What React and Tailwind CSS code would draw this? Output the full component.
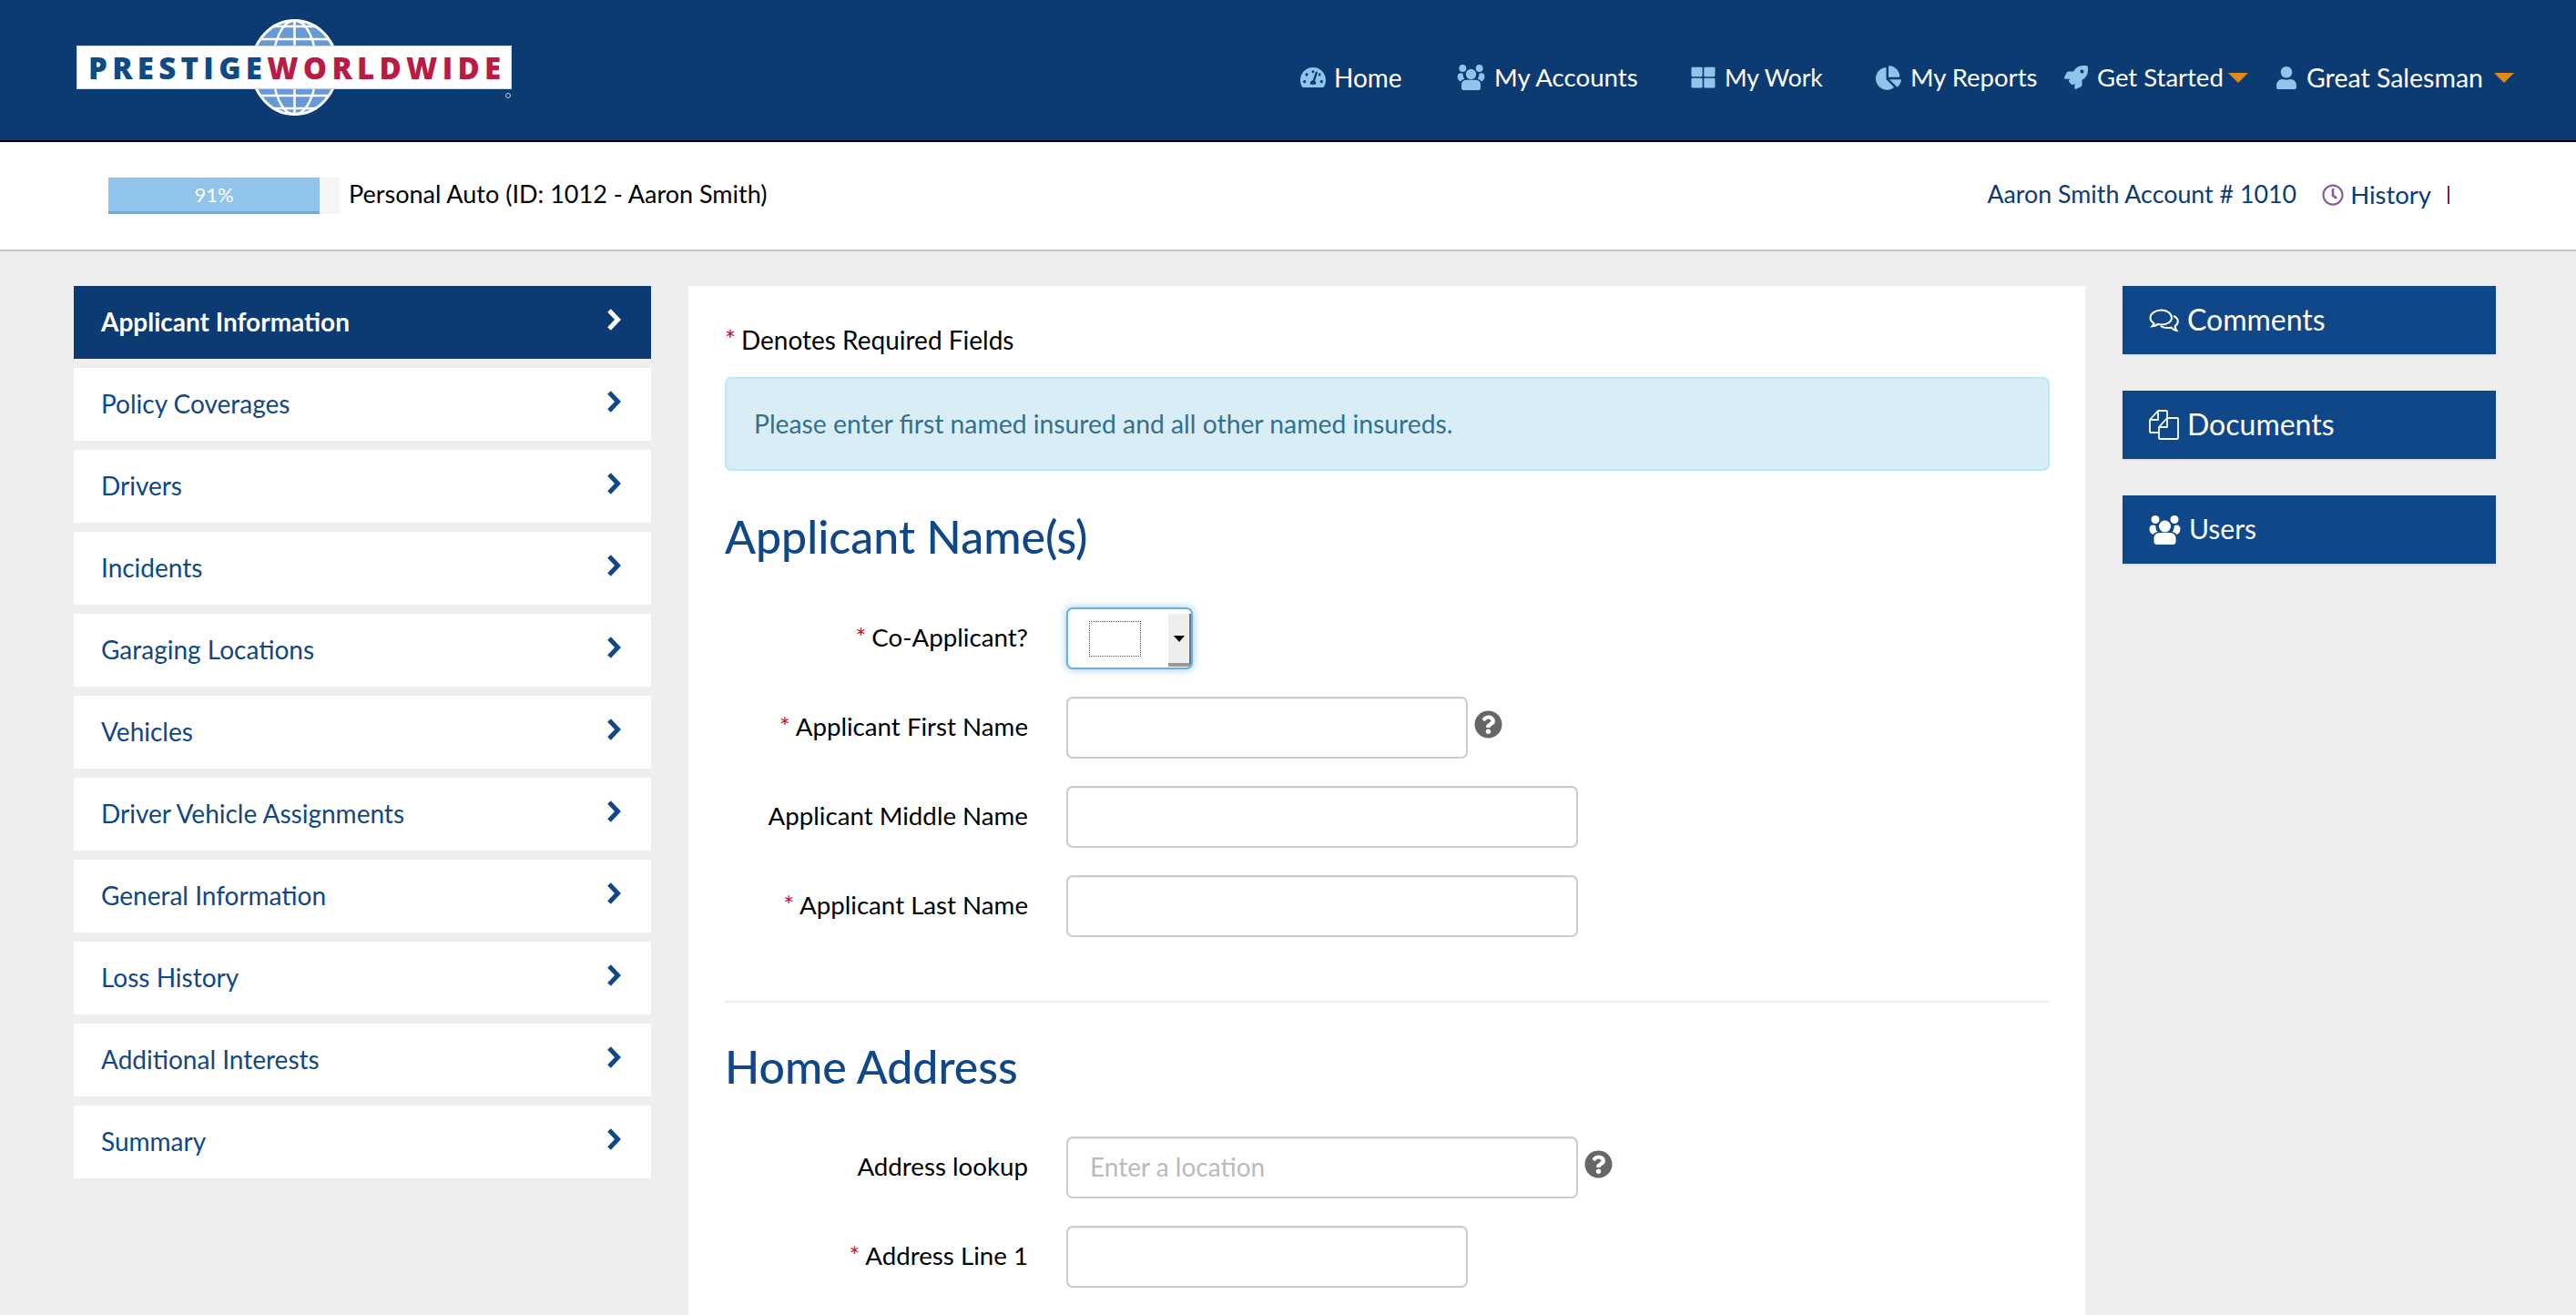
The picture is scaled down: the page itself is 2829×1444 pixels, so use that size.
import { FaChartPie, FaQuestionCircle, FaRegClock, FaRocket, FaTachometerAlt, FaThLarge, FaUser } from 'react-icons/fa';

const sideItems = [
  'Applicant Information',
  'Policy Coverages',
  'Drivers',
  'Incidents',
  'Garaging Locations',
  'Vehicles',
  'Driver Vehicle Assignments',
  'General Information',
  'Loss History',
  'Additional Interests',
  'Summary',
];

const UsersIcon = ({ className }) => (
  <svg className={className} viewBox="0 0 34 32" fill="currentColor">
    <circle cx="6.5" cy="4.5" r="4.5" />
    <circle cx="27.5" cy="4.5" r="4.5" />
    <path d="M0 15c0-3 1.500-4.500 4-4.500 1 0 2 .5 3 1-.5 3 .5 5 2 6.500-2.500.5-4 1.500-5 3C1.500 20 0 18 0 15zM34 15c0-3-1.500-4.500-4-4.500-1 0-2 .5-3 1 .5 3-.5 5-2 6.500 2.500.5 4 1.500 5 3 2.500-1 4-3 4-6z" />
    <circle cx="17" cy="12" r="6.500" />
    <path d="M5 25c0-4 3-6 7-6h10c4 0 7 2 7 6v4c0 2-1.500 3-3 3H8c-1.500 0-3-1-3-3z" />
  </svg>
);

const CommentsIcon = ({ className }) => (
  <svg className={className} viewBox="0 0 33 26" fill="none" stroke="currentColor" strokeWidth="2">
    <path d="M14 1.500c-6.500 0-12.500 3.500-12.500 8.500 0 2.500 1.500 4.500 4 6-.3 1.200-1 2.200-2 3.300 2.500-.2 4.500-1 6-2.200 1.500.3 3 .4 4.500.4 6.500 0 11-3.500 11-7.500s-4.500-8.500-11-8.500z" />
    <path d="M27 8c3 1.300 4.800 3.500 4.800 6 0 2.200-1.300 4-3.300 5.300.2 1.700 1 3.200 2 4.700-2.500-.5-4.500-1.700-6-3.300-1.300.3-2.600.4-4 .4-3 0-5.500-.7-7.500-2" />
  </svg>
);

const DocsIcon = ({ className }) => (
  <svg className={className} viewBox="0 0 33 33" fill="none" stroke="currentColor" strokeWidth="1.800" strokeLinejoin="round">
    <path d="M11 25H2a1 1 0 0 1-1-1V11l9-10h9a1 1 0 0 1 1 1v7" />
    <path d="M10 1v10H1" />
    <path d="M12 32a1 1 0 0 1-1-1V19l9-10h11a1 1 0 0 1 1 1v21a1 1 0 0 1-1 1z" />
    <path d="M20 9v10h-9" />
  </svg>
);

const Chevron = () => (
  <svg className="w-[17px] h-[24px] mb-[6px]" viewBox="0 0 17 24" fill="none" stroke="currentColor" strokeWidth="5">
    <polyline points="3,2 12.500,12 3,22" />
  </svg>
);

const Globe = () => (
  <svg className="absolute left-[191px] top-[-29px] w-[97px] h-[106px]" viewBox="0 0 97 106" fill="none" stroke="#fff" strokeWidth="2.500">
    <ellipse cx="48.500" cy="53" rx="47" ry="51.500" fill="#6699d6" strokeWidth="3" />
    <ellipse cx="48.500" cy="53" rx="24" ry="51.500" />
    <path d="M48.500 2v102M10 22h77M3 38h91M3 68h91M10 84h77M24 8h49M24 98h49" />
  </svg>
);

const Logo = () => (
  <div className="relative ml-[84px] mt-[50px] w-[478px]">
    <Globe />
    <div className="relative h-[48px] bg-white border border-[#c9d6e6] flex items-center pl-[12px] font-['Open_Sans',sans-serif] font-extrabold text-[33px] leading-none tracking-[5.300px] whitespace-nowrap">
      <span className="text-[#0e4a84]">PRESTIGE</span>
      <span className="text-[#b81c45]">WORLDWIDE</span>
    </div>
    <span className="absolute left-[471px] top-[52px] w-[6px] h-[6px] rounded-full border border-[#b9c9dc]"></span>
  </div>
);

const NavItem = ({ icon, label, width, className }) => (
  <a className={`flex items-center whitespace-nowrap ${className}`}>
    {icon}
    <span className={width}>{label}</span>
  </a>
);

const Caret = ({ className }) => (
  <span className={`w-0 h-0 border-l-[11px] border-r-[11px] border-t-[11px] border-l-transparent border-r-transparent border-t-[#e08a1e] ${className}`}></span>
);

const Header = () => (
  <header className="h-[156px] shrink-0 bg-[#0c3a73] border-b-2 border-black flex items-start text-white">
    <Logo />
    <nav className="ml-auto mr-[68px] mt-[66px] flex items-center text-[28px] leading-[38px]">
      <NavItem width="w-[74px]" label="Home" icon={<FaTachometerAlt className="text-[#90c4ea] w-[28px] h-[28px] mr-[9px]" />} />
      <NavItem width="w-[157px] text-[27.700px]" className="ml-[61px]" label="My Accounts" icon={<UsersIcon className="text-[#90c4ea] w-[31px] h-[28px] mr-[10px]" />} />
      <NavItem width="w-[107px] text-[26.500px]" className="ml-[59px]" label="My Work" icon={<FaThLarge className="text-[#90c4ea] w-[27px] h-[26px] mr-[10px]" />} />
      <NavItem width="w-[138px] text-[27.500px]" className="ml-[59px]" label="My Reports" icon={<FaChartPie className="text-[#90c4ea] w-[28px] h-[27px] mr-[10px]" />} />
      <NavItem width="w-[139px] text-[27.500px]" className="ml-[31px]" label="Get Started" icon={<FaRocket className="text-[#90c4ea] w-[26px] h-[26px] mr-[10px]" />} />
      <Caret className="ml-[5px]" />
      <NavItem width="w-[194px] text-[28.500px]" className="ml-[31px]" label="Great Salesman" icon={<FaUser className="text-[#90c4ea] w-[22px] h-[25px] mr-[11px]" />} />
      <Caret className="ml-[12px]" />
    </nav>
  </header>
);

const SubBar = () => (
  <div className="h-[120px] shrink-0 bg-white border-b-2 border-[#c8c8c8] flex items-center pl-[119px] pr-[139px] text-[27px]">
    <div className="w-[254px] h-[40px] bg-[#f5f5f5]">
      <div className="w-[232px] h-full bg-[#90c4ea] border-b-[3px] border-[#7aa8cc] text-white text-[22px] leading-[37px] text-center">91%</div>
    </div>
    <span className="ml-[10px] mb-[3px] text-black">Personal Auto (ID: 1012 - Aaron Smith)</span>
    <a className="ml-auto mb-[3px] text-[#0c3a73] text-[26.800px]">Aaron Smith Account # 1010</a>
    <FaRegClock className="ml-[28px] mb-[3px] text-[#8a5a9e] w-[24px] h-[24px]" />
    <a className="ml-[7px] mb-[3px] text-[#0c3a73] text-[27.500px] leading-[36px]">History</a>
    <span className="ml-[18px] mb-[3px] w-[2px] h-[20px] bg-[#8a1f3d]"></span>
  </div>
);

const Sidebar = () => (
  <aside className="w-[634px] shrink-0 flex flex-col gap-[10px]">
    {sideItems.map((item, i) => (
      <a
        key={item}
        className={`h-[80px] flex items-center justify-between pl-[30px] pr-[32px] text-[28px] ${i === 0 ? 'bg-[#0c3a73] text-white font-bold' : 'bg-white text-[#0f4788]'}`}
      >
        <span className="mb-[2px]">{item}</span>
        <Chevron />
      </a>
    ))}
  </aside>
);

const Req = () => <span className="text-[#c8102e] mr-[6px]">*</span>;

const Label = ({ required, children }) => (
  <label className="w-[333px] mr-[42px] mb-[3px] shrink-0 text-right text-black text-[27.700px]">
    {required && <Req />}
    {children}
  </label>
);

const Help = () => <FaQuestionCircle className="ml-[7px] mb-[8px] w-[31px] h-[31px] text-[#666666]" />;

const Field = ({ label, required, width, help, placeholder }) => (
  <div className="h-[68px] mb-[30px] flex items-center">
    <Label required={required}>{label}</Label>
    <input
      placeholder={placeholder}
      className={`${width} h-[68px] px-[24px] pb-[2px] bg-white rounded-[7px] border-2 border-[#cccccc] shadow-[inset_0_1px_1px_rgba(0,0,0,0.08)] text-[28px] placeholder:text-[#bbbbbb] outline-none`}
    />
    {help && <Help />}
  </div>
);

const CoApplicant = () => (
  <div className="h-[68px] mb-[30px] flex items-center">
    <Label required>Co-Applicant?</Label>
    <div className="w-[139px] h-[68px] bg-white rounded-[7px] border-2 border-[#66afe9] shadow-[0_0_10px_rgba(102,175,233,0.7)] flex items-center overflow-hidden">
      <div className="ml-[23px] w-[57px] h-[39px] border border-dotted border-[#555555]"></div>
      <div className="ml-auto mt-[4px] w-[25px] h-[58px] bg-[#eeeeee] border-r-2 border-r-[#777777] border-b-[4px] border-b-[#999999] flex items-center justify-center">
        <span className="w-0 h-0 border-l-[6px] border-r-[6px] border-t-[7px] border-l-transparent border-r-transparent border-t-black"></span>
      </div>
    </div>
  </div>
);

const MainCard = () => (
  <main className="w-[1534px] ml-[41px] shrink-0 bg-white pt-[40px] pl-[40px] pr-[39px]">
    <p className="h-[38px] leading-[38px] text-[28px] text-black"><Req />Denotes Required Fields</p>
    <div className="mt-[22px] h-[103px] flex items-center pl-[30px] rounded-[7px] bg-[#d9edf7] border-2 border-[#bce8f1] text-[#31708f] text-[28.300px]">
      <span className="mb-[1px]">Please enter first named insured and all other named insureds.</span>
    </div>
    <h2 className="mt-[42px] mb-[48px] font-medium text-[50px] leading-[60px] text-[#0f4788]">Applicant Name(s)</h2>
    <CoApplicant />
    <Field label="Applicant First Name" required width="w-[441px]" help />
    <Field label="Applicant Middle Name" width="w-[562px]" />
    <Field label="Applicant Last Name" required width="w-[562px]" />
    <hr className="mt-[70px] border-t-2 border-[#eeeeee]" />
    <h2 className="mt-[40px] mb-[47px] font-medium text-[50px] leading-[60px] text-[#0f4788]">Home Address</h2>
    <Field label="Address lookup" width="w-[562px]" help placeholder="Enter a location" />
    <Field label="Address Line 1" required width="w-[441px]" />
  </main>
);

const SideButton = ({ icon, label, textClass }) => (
  <a className="h-[75px] flex items-center pl-[29px] bg-[#0f4788] text-white shadow-[0_1px_2px_rgba(0,0,0,0.1)]">
    {icon}
    <span className={`mb-[2px] ${textClass}`}>{label}</span>
  </a>
);

const RightColumn = () => (
  <aside className="w-[410px] ml-[41px] shrink-0 flex flex-col gap-[40px]">
    <SideButton textClass="text-[32px]" label="Comments" icon={<CommentsIcon className="w-[33px] h-[26px] mr-[9px]" />} />
    <SideButton textClass="text-[32px]" label="Documents" icon={<DocsIcon className="w-[33px] h-[33px] mr-[9px]" />} />
    <SideButton textClass="text-[30px]" label="Users" icon={<UsersIcon className="w-[35px] h-[32px] mr-[9px]" />} />
  </aside>
);

export default function App() {
  return (
    <div className="h-[1444px] overflow-hidden flex flex-col bg-[#eeeeee] font-['Lato',sans-serif]">
      <Header />
      <SubBar />
      <div className="flex-1 min-h-0 flex items-stretch pl-[81px] pt-[38px]">
        <Sidebar />
        <MainCard />
        <RightColumn />
      </div>
    </div>
  );
}
